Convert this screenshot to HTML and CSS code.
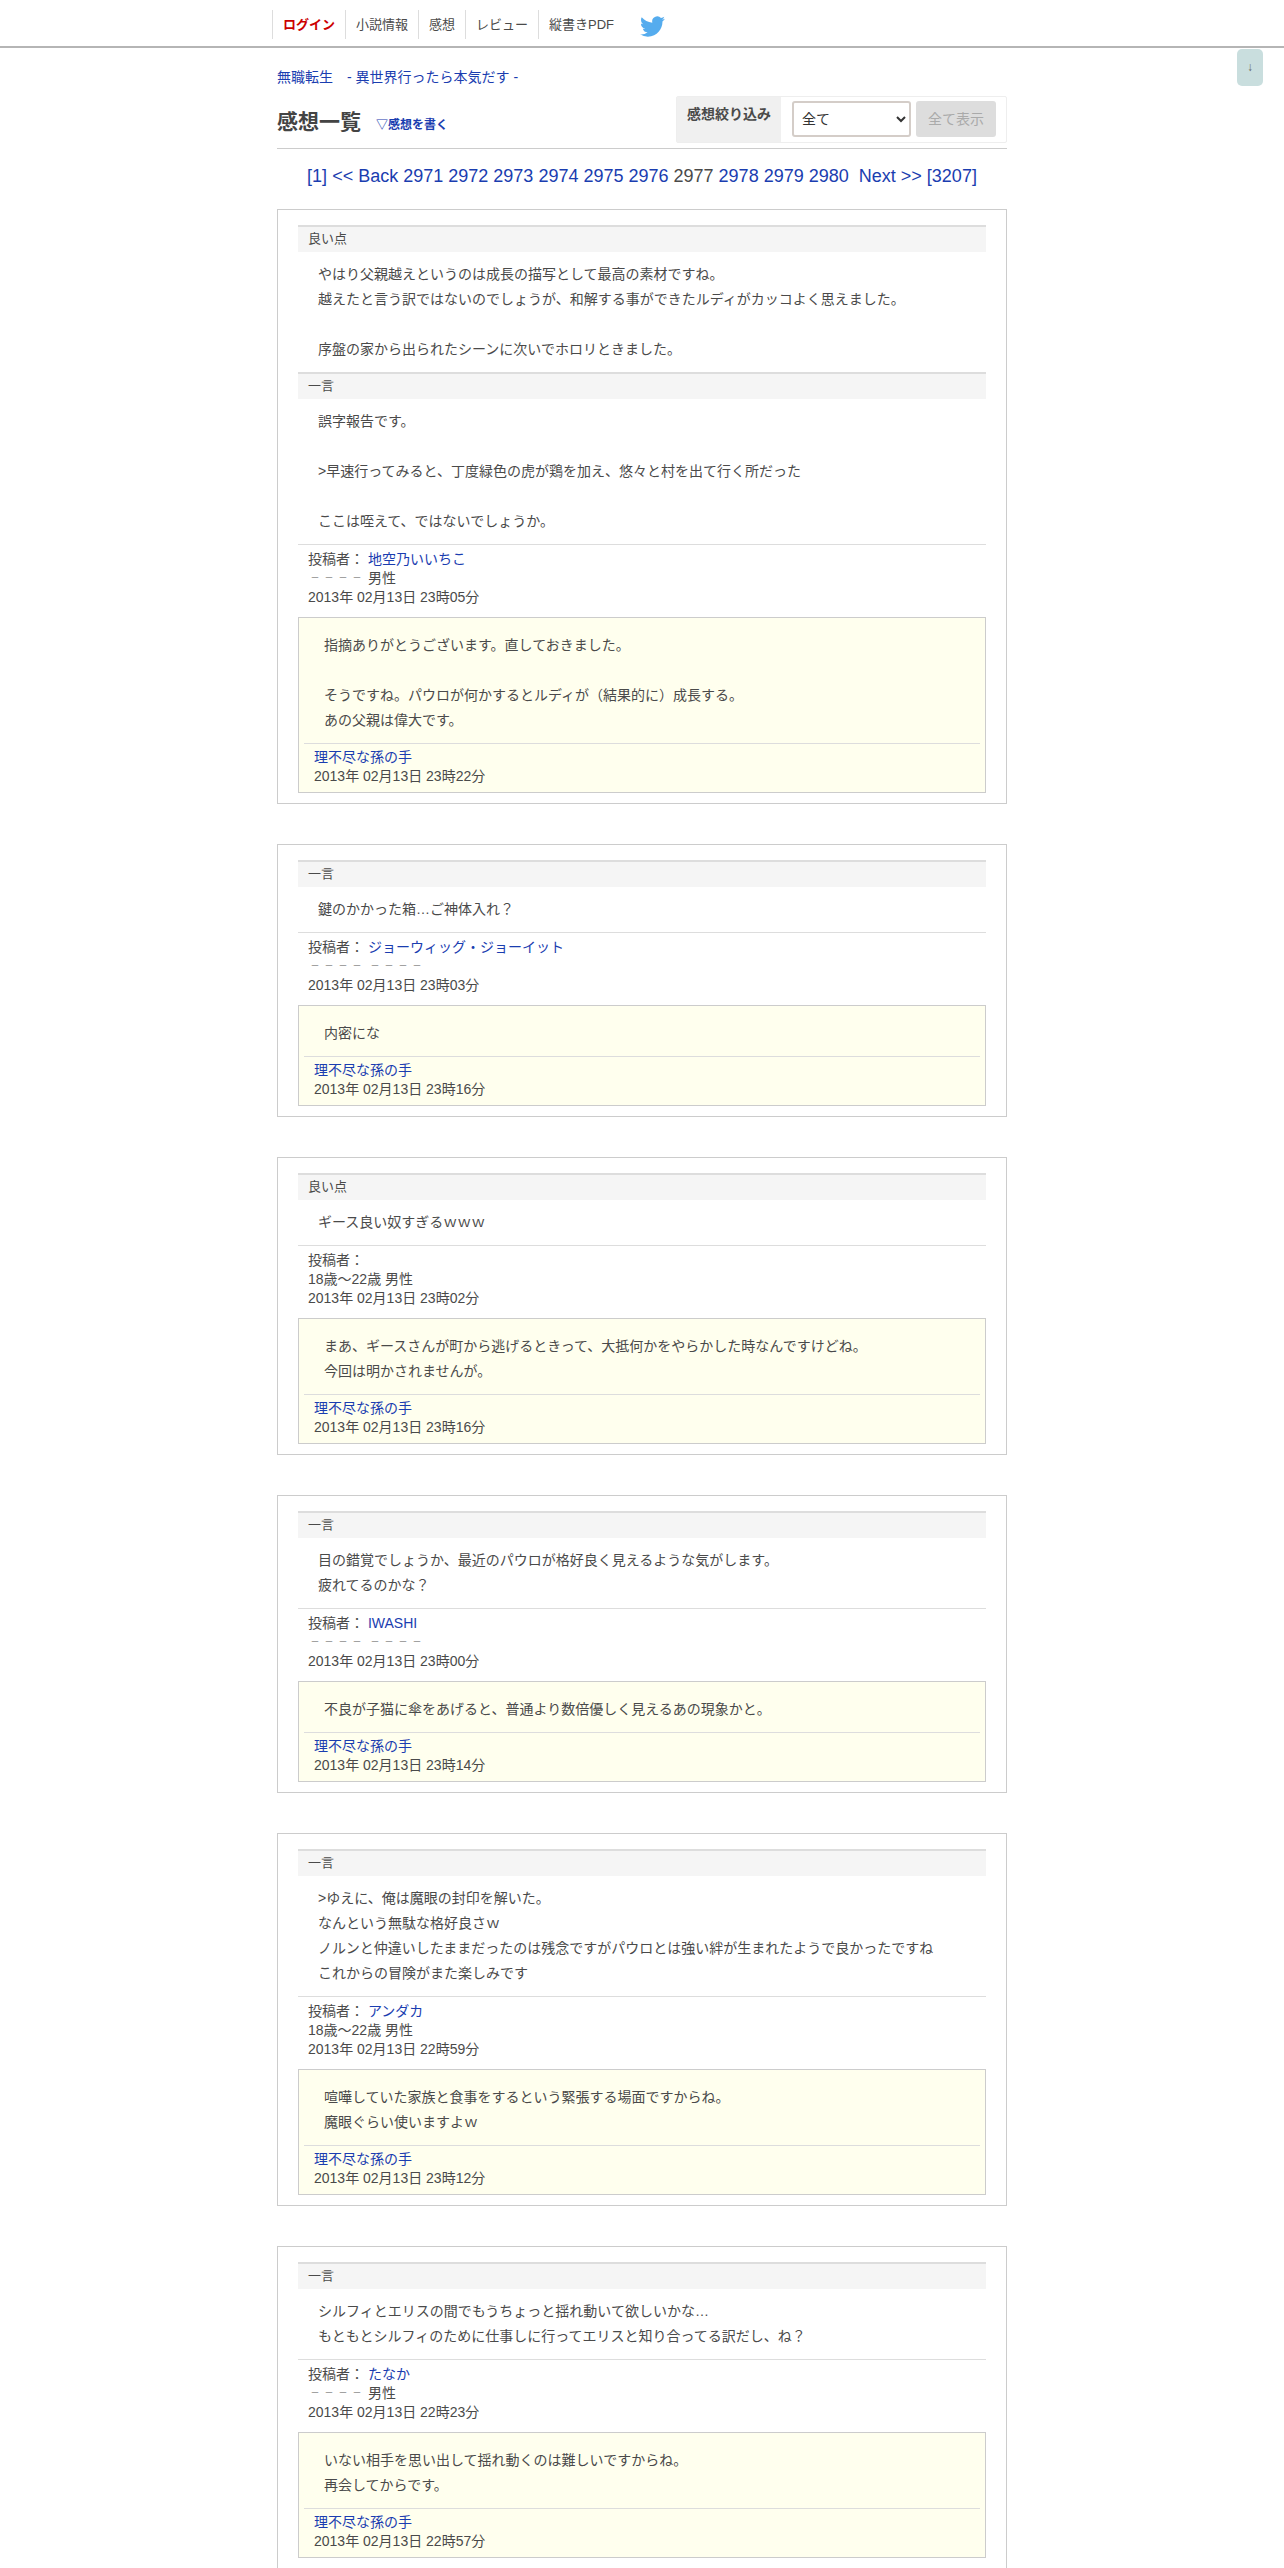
FILE: index.html
```html
<!DOCTYPE html>
<html lang="ja">
<head>
<meta charset="utf-8">
<title>感想一覧</title>
<link rel="stylesheet" href="styles.css">
</head>
<body>
<header class="topbar">
  <nav class="topnav">
    <a class="tab tab-login" href="#">ログイン</a>
    <a class="tab" href="#">小説情報</a>
    <a class="tab" href="#">感想</a>
    <a class="tab" href="#">レビュー</a>
    <a class="tab" href="#">縦書きPDF</a>
    <svg class="bird" viewBox="0 0 24 24" width="25" height="25"><path fill="#55acee" d="M23.95 4.57a10 10 0 0 1-2.82.78 4.96 4.96 0 0 0 2.16-2.72c-.95.55-2 .95-3.12 1.18a4.92 4.92 0 0 0-8.38 4.48C7.69 8.1 4.07 6.13 1.64 3.16a4.82 4.82 0 0 0-.67 2.48c0 1.7.87 3.21 2.19 4.1a4.9 4.9 0 0 1-2.23-.62v.06a4.92 4.92 0 0 0 3.95 4.83 5 5 0 0 1-2.21.08 4.94 4.94 0 0 0 4.6 3.42A9.87 9.87 0 0 1 0 19.54a14 14 0 0 0 7.56 2.21c9.05 0 14-7.5 14-13.98 0-.21 0-.42-.02-.63a9.94 9.94 0 0 0 2.41-2.57z"/></svg>
  </nav>
</header>
<a class="scroll-btn" href="#">↓</a>
<main class="wrap">
  <p class="novel"><a href="#">無職転生　- 異世界行ったら本気だす -</a></p>
  <div class="head">
    <div class="head-title"><h1>感想一覧</h1><a class="write" href="#">▽感想を書く</a></div>
    <form class="filter">
      <span class="filter-label">感想絞り込み</span>
      <select class="filter-select"><option>全て</option></select>
      <span class="filter-btn">全て表示</span>
    </form>
  </div>
  <div class="pager"><a href="#">[1]</a> <a href="#">&lt;&lt; Back</a> <a href="#">2971</a> <a href="#">2972</a> <a href="#">2973</a> <a href="#">2974</a> <a href="#">2975</a> <a href="#">2976</a> 2977 <a href="#">2978</a> <a href="#">2979</a> <a href="#">2980</a> &nbsp;<a href="#">Next &gt;&gt;</a> <a href="#">[3207]</a></div>

  <article class="card">
    <h2 class="kind">良い点</h2>
    <div class="body">やはり父親越えというのは成長の描写として最高の素材ですね。<br>越えたと言う訳ではないのでしょうが、和解する事ができたルディがカッコよく思えました。<br><br>序盤の家から出られたシーンに次いでホロリときました。</div>
    <h2 class="kind">一言</h2>
    <div class="body">誤字報告です。<br><br>&gt;早速行ってみると、丁度緑色の虎が鶏を加え、悠々と村を出て行く所だった<br><br>ここは咥えて、ではないでしょうか。</div>
    <div class="meta">投稿者： <a href="#">地空乃いいちこ</a><br><span class="dash">－－－－</span> 男性<br>2013年 02月13日 23時05分</div>
    <div class="reply">
      <div class="reply-body">指摘ありがとうございます。直しておきました。<br><br>そうですね。パウロが何かするとルディが（結果的に）成長する。<br>あの父親は偉大です。</div>
      <div class="reply-meta"><a href="#">理不尽な孫の手</a><br>2013年 02月13日 23時22分</div>
    </div>
  </article>

  <article class="card">
    <h2 class="kind">一言</h2>
    <div class="body">鍵のかかった箱…ご神体入れ？</div>
    <div class="meta">投稿者： <a href="#">ジョーウィッグ・ジョーイット</a><br><span class="dash">－－－－</span> <span class="dash">－－－－</span><br>2013年 02月13日 23時03分</div>
    <div class="reply">
      <div class="reply-body">内密にな</div>
      <div class="reply-meta"><a href="#">理不尽な孫の手</a><br>2013年 02月13日 23時16分</div>
    </div>
  </article>

  <article class="card">
    <h2 class="kind">良い点</h2>
    <div class="body">ギース良い奴すぎるｗｗｗ</div>
    <div class="meta">投稿者：<br>18歳～22歳 男性<br>2013年 02月13日 23時02分</div>
    <div class="reply">
      <div class="reply-body">まあ、ギースさんが町から逃げるときって、大抵何かをやらかした時なんですけどね。<br>今回は明かされませんが。</div>
      <div class="reply-meta"><a href="#">理不尽な孫の手</a><br>2013年 02月13日 23時16分</div>
    </div>
  </article>

  <article class="card">
    <h2 class="kind">一言</h2>
    <div class="body">目の錯覚でしょうか、最近のパウロが格好良く見えるような気がします。<br>疲れてるのかな？</div>
    <div class="meta">投稿者： <a href="#">IWASHI</a><br><span class="dash">－－－－</span> <span class="dash">－－－－</span><br>2013年 02月13日 23時00分</div>
    <div class="reply">
      <div class="reply-body">不良が子猫に傘をあげると、普通より数倍優しく見えるあの現象かと。</div>
      <div class="reply-meta"><a href="#">理不尽な孫の手</a><br>2013年 02月13日 23時14分</div>
    </div>
  </article>

  <article class="card">
    <h2 class="kind">一言</h2>
    <div class="body">&gt;ゆえに、俺は魔眼の封印を解いた。<br>なんという無駄な格好良さｗ<br>ノルンと仲違いしたままだったのは残念ですがパウロとは強い絆が生まれたようで良かったですね<br>これからの冒険がまた楽しみです</div>
    <div class="meta">投稿者： <a href="#">アンダカ</a><br>18歳～22歳 男性<br>2013年 02月13日 22時59分</div>
    <div class="reply">
      <div class="reply-body">喧嘩していた家族と食事をするという緊張する場面ですからね。<br>魔眼ぐらい使いますよｗ</div>
      <div class="reply-meta"><a href="#">理不尽な孫の手</a><br>2013年 02月13日 23時12分</div>
    </div>
  </article>

  <article class="card">
    <h2 class="kind">一言</h2>
    <div class="body">シルフィとエリスの間でもうちょっと揺れ動いて欲しいかな…<br>もともとシルフィのために仕事しに行ってエリスと知り合ってる訳だし、ね？</div>
    <div class="meta">投稿者： <a href="#">たなか</a><br><span class="dash">－－－－</span> 男性<br>2013年 02月13日 22時23分</div>
    <div class="reply">
      <div class="reply-body">いない相手を思い出して揺れ動くのは難しいですからね。<br>再会してからです。</div>
      <div class="reply-meta"><a href="#">理不尽な孫の手</a><br>2013年 02月13日 22時57分</div>
    </div>
  </article>
</main>
</body>
</html>
```
FILE: styles.css
```css
* { box-sizing: border-box; }
html, body { margin: 0; padding: 0; }
body {
  background: #fff;
  color: #4a4a4a;
  font-family: "Liberation Sans", "Noto Sans CJK JP", sans-serif;
  font-size: 14px;
  line-height: 19px;
  height: 2568px;
  overflow: hidden;
}
a { color: #1a3db0; text-decoration: none; }
.topbar { height: 48px; border-bottom: 2px solid #b5b5b5; }
.topnav { margin-left: 272px; padding-top: 10px; display: flex; align-items: flex-start; }
.tab { height: 29px; line-height: 29px; padding: 0 10px; border-left: 1px solid #ddd; font-size: 13px; color: #4a4a4a; }
.tab-login { color: #c00; font-weight: bold; }
.bird { margin: 4px 0 0 16px; }
.scroll-btn {
  position: absolute; top: 49px; left: 1237px; width: 26px; height: 37px;
  background: #c9dede; border-radius: 5px; color: #666; text-align: center;
  line-height: 37px; font-size: 12px;
}
.wrap { width: 730px; margin-left: 277px; padding-top: 20px; }
.novel { margin: 0; height: 19px; }
.head { display: flex; justify-content: space-between; align-items: flex-start; height: 62px; padding-top: 9px; border-bottom: 1px solid #ccc; }
.head-title { display: flex; align-items: baseline; padding-top: 12px; }
h1 { margin: 0; font-size: 21px; line-height: 28px; color: #444; font-weight: bold; }
.write { margin-left: 15px; font-size: 12px; font-weight: bold; }
.filter { display: flex; align-items: flex-start; height: 47px; width: 331px; border: 1px solid #eee; border-radius: 2px; }
.filter-label { width: 104px; height: 45px; background: #f0f0f0; font-size: 14px; font-weight: bold; text-align: center; padding-top: 8px; flex: none; }
.filter-select { width: 119px; height: 36px; margin: 4px 0 0 11px; padding-left: 4px; font: 14px "Liberation Sans", "Noto Sans CJK JP", sans-serif; color: #333; background: #fff; border: 2px solid #d4cdc8; border-radius: 3px; flex: none; }
.filter-btn { width: 80px; height: 36px; margin: 4px 0 0 5px; background: #ddd; color: #aaa; border-radius: 3px; font-size: 14px; line-height: 36px; text-align: center; flex: none; }
.pager { text-align: center; font-size: 18px; line-height: 24px; margin-top: 15px; height: 24px; white-space: nowrap; }
.card { border: 1px solid #ccc; padding: 15px 20px 10px; margin-bottom: 40px; }
.pager + .card { margin-top: 21px; }
.kind { margin: 0; height: 27px; background: #f5f5f5; border-top: 2px solid #ddd; padding-left: 10px; font-size: 13px; line-height: 24px; font-weight: normal; color: #4a4a4a; }
.body { padding: 10px 20px; font-size: 14px; line-height: 25px; }
.meta { border-top: 1px solid #ddd; padding: 5px 10px 10px; font-size: 14px; line-height: 19px; }
.dash { color: #777; font-size: 9px; line-height: 1; letter-spacing: 5px; padding-left: 2.5px; margin-right: -2.5px; vertical-align: 2px; }
.reply { border: 1px solid #ccc; background: #ffffee; padding: 0 5px; }
.reply-body { padding: 15px 20px 10px; font-size: 14px; line-height: 25px; }
.reply-meta { border-top: 1px solid #ddd; padding: 4px 10px 6px; font-size: 14px; line-height: 19px; }
```
